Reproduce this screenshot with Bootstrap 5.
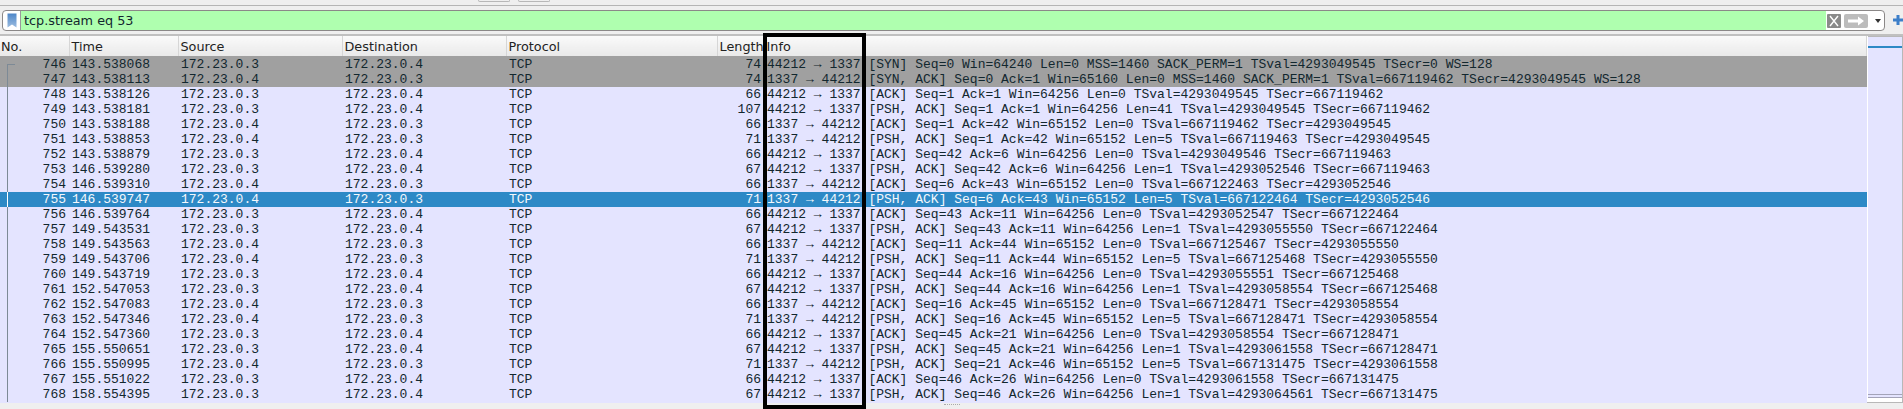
<!DOCTYPE html>
<html lang="en">
<head>
    <meta charset="UTF-8">
    <meta name="viewport" content="width=device-width, initial-scale=1.0">
    <title>Wireshark packet list</title>
    <link href="https://cdn.jsdelivr.net/npm/bootstrap@5.3.0/dist/css/bootstrap.min.css" rel="stylesheet">
    <style>
        html, body { height: 409px; overflow: hidden; }
        body { background: #efefef; position: relative; font-family: "DejaVu Sans", sans-serif; }
        .top-strip { height: 6px; border-bottom: 1px solid #b5b5b5; padding-left: 478px; gap: 8px; }
        .top-btn { width: 32px; height: 2px; border: 1px solid #b8b8b8; border-top: 0; border-radius: 0 0 3px 3px; }
        .filter-row { height: 30px; padding: 4px 0 3px 2px; gap: 8px; border-bottom: 2px solid #c0c0c0; }
        .filter-box { width: 1887px; height: 21px; border: 1px solid #8b8888; border-radius: 4px; background: #fff; overflow: hidden; }
        .mark-btn { width: 18px; border-right: 1px solid #9a9a9a; }
        .filter-input { flex: 1; min-width: 0; height: 100%; border: 0; border-radius: 0; padding: 0 3px; background: #afffaf; color: #12272e; font: 12.8px "DejaVu Sans", sans-serif; }
        .filter-input:focus { background: #afffaf; box-shadow: none; color: #12272e; }
        .act-clear { width: 14px; height: 14px; margin-left: 1px; flex: none; }
        .act-apply { width: 24px; height: 14px; margin-left: 3px; flex: none; }
        .act-caret { width: 0; height: 0; margin: 0 3px 0 7px; flex: none; border-left: 3.5px solid transparent; border-right: 3.5px solid transparent; border-top: 4px solid #333; }
        .add-plus { width: 10px; height: 10px; margin-top: 5px; flex: none; }
        .pkt-pane { height: 367px; border-bottom: 1px solid #b8b8b8; background: #e4e4ff; }
        .pkt-list { width: 1867px; height: 367px; overflow: hidden; background: #e4e4ff; }
        .pkt-table { table-layout: fixed; width: 1867px; margin: 0; font: 13px/15px "Liberation Mono", monospace; }
        .pkt-table > :not(caption) > * > * { padding: 0 3px; height: 15px; white-space: nowrap; overflow: hidden; border: 0; box-shadow: none; color: #12272e; background: #e4e4ff; }
        .pkt-table > thead > tr > th { height: 20px; padding: 1px 2px 0; font: 400 12.8px/19px "DejaVu Sans", sans-serif; color: #222; background: linear-gradient(#fafafa, #e9e9e9); border-right: 1px solid #d6d6d6; }
        .pkt-table > thead > tr > th:first-child { padding-left: 1px; }
        .pkt-table > tbody > tr:first-child > td { height: 16px; padding-top: 1px; }
        .pkt-table > tbody > tr.pkt-syn > td { background: #a0a0a0; }
        .pkt-table > tbody > tr.pkt-sel > td { background: #2d89c6; color: #f4f8fc; }
        .pkt-table > tbody > tr > td.num { text-align: right; position: relative; padding-right: 3px; }
        .pkt-table > tbody > tr > td.no-cell::before { content: ""; position: absolute; left: 7px; top: 0; bottom: 0; border-left: 1px solid #7d8a96; }
        .pkt-table > tbody > tr:first-child > td.no-cell::before { top: 8px; width: 8px; border-top: 1px solid #7d8a96; }
        .pkt-table > tbody > tr.pkt-sel > td.no-cell::before { border-left-color: #fff; }
        .map-gap { width: 1px; background: #fff; }
        .pkt-map { width: 35px; border-top: 1px solid #b8b8b8; border-right: 1px solid #b8b8b8; position: relative; }
        .map-sel { position: absolute; left: 0; right: 0; top: 9px; height: 2px; background: #2d89c6; }
        .map-end { position: absolute; left: 0; right: 0; bottom: 4px; height: 4px; border-top: 1px solid #a3a3b8; border-bottom: 1px solid #a3a3b8; }
        .map-foot { position: absolute; left: 0; right: 0; bottom: 0; height: 4px; background: #fff; }
        .grip { width: 16px; height: 1px; margin-top: 1px; border-top: 1px dotted #aaa; }
        .info-box { position: absolute; left: 763px; top: 33px; width: 103px; height: 376px; border: 4px solid #000; pointer-events: none; }
    </style>
</head>
<body>

    <div class="top-strip d-flex">
        <div class="top-btn"></div>
        <div class="top-btn"></div>
    </div>

    <div class="filter-row d-flex">
        <div class="filter-box d-flex align-items-center">
            <div class="mark-btn h-100 d-flex align-items-center justify-content-center">
                <svg width="10" height="15" viewBox="0 0 10 15"><defs><linearGradient id="mk" x1="0" y1="0" x2="0" y2="1"><stop offset="0" stop-color="#4d86c8"/><stop offset="1" stop-color="#9dbde0"/></linearGradient></defs><path d="M0.5 0.5H9.5V14.5L5 11.5L0.5 14.5Z" fill="url(#mk)"/></svg>
            </div>
            <input class="form-control filter-input" type="text" value="tcp.stream eq 53">
            <svg class="act-clear" viewBox="0 0 14 14"><rect width="14" height="14" rx="1" fill="#8a8a8a"/><path d="M3 2L11 12M11 2L3 12" stroke="#fff" stroke-width="1.4"/></svg>
            <svg class="act-apply" viewBox="0 0 24 14"><rect width="24" height="14" rx="2" fill="#bcbcbc"/><path d="M4 5.5H14V2.5L20 7L14 11.5V8.5H4Z" fill="#fff"/></svg>
            <div class="act-caret"></div>
        </div>
        <svg class="add-plus" viewBox="0 0 10 10"><path d="M3.5 0H6.5V3.5H10V6.5H6.5V10H3.5V6.5H0V3.5H3.5Z" fill="#3d7fc9"/></svg>
    </div>

    <div class="pkt-pane d-flex">
        <div class="pkt-list">
            <table class="table pkt-table">
                <colgroup>
                    <col style="width:69px"><col style="width:109px"><col style="width:164px"><col style="width:164px"><col style="width:211px"><col style="width:47px"><col>
                </colgroup>
                <thead>
                    <tr><th>No.</th><th>Time</th><th>Source</th><th>Destination</th><th>Protocol</th><th>Length</th><th>Info</th></tr>
                </thead>
                <tbody>
                    <tr class="pkt-syn"><td class="num no-cell">746</td><td>143.538068</td><td>172.23.0.3</td><td>172.23.0.4</td><td>TCP</td><td class="num">74</td><td>44212 → 1337 [SYN] Seq=0 Win=64240 Len=0 MSS=1460 SACK_PERM=1 TSval=4293049545 TSecr=0 WS=128</td></tr>
                    <tr class="pkt-syn"><td class="num no-cell">747</td><td>143.538113</td><td>172.23.0.4</td><td>172.23.0.3</td><td>TCP</td><td class="num">74</td><td>1337 → 44212 [SYN, ACK] Seq=0 Ack=1 Win=65160 Len=0 MSS=1460 SACK_PERM=1 TSval=667119462 TSecr=4293049545 WS=128</td></tr>
                    <tr><td class="num no-cell">748</td><td>143.538126</td><td>172.23.0.3</td><td>172.23.0.4</td><td>TCP</td><td class="num">66</td><td>44212 → 1337 [ACK] Seq=1 Ack=1 Win=64256 Len=0 TSval=4293049545 TSecr=667119462</td></tr>
                    <tr><td class="num no-cell">749</td><td>143.538181</td><td>172.23.0.3</td><td>172.23.0.4</td><td>TCP</td><td class="num">107</td><td>44212 → 1337 [PSH, ACK] Seq=1 Ack=1 Win=64256 Len=41 TSval=4293049545 TSecr=667119462</td></tr>
                    <tr><td class="num no-cell">750</td><td>143.538188</td><td>172.23.0.4</td><td>172.23.0.3</td><td>TCP</td><td class="num">66</td><td>1337 → 44212 [ACK] Seq=1 Ack=42 Win=65152 Len=0 TSval=667119462 TSecr=4293049545</td></tr>
                    <tr><td class="num no-cell">751</td><td>143.538853</td><td>172.23.0.4</td><td>172.23.0.3</td><td>TCP</td><td class="num">71</td><td>1337 → 44212 [PSH, ACK] Seq=1 Ack=42 Win=65152 Len=5 TSval=667119463 TSecr=4293049545</td></tr>
                    <tr><td class="num no-cell">752</td><td>143.538879</td><td>172.23.0.3</td><td>172.23.0.4</td><td>TCP</td><td class="num">66</td><td>44212 → 1337 [ACK] Seq=42 Ack=6 Win=64256 Len=0 TSval=4293049546 TSecr=667119463</td></tr>
                    <tr><td class="num no-cell">753</td><td>146.539280</td><td>172.23.0.3</td><td>172.23.0.4</td><td>TCP</td><td class="num">67</td><td>44212 → 1337 [PSH, ACK] Seq=42 Ack=6 Win=64256 Len=1 TSval=4293052546 TSecr=667119463</td></tr>
                    <tr><td class="num no-cell">754</td><td>146.539310</td><td>172.23.0.4</td><td>172.23.0.3</td><td>TCP</td><td class="num">66</td><td>1337 → 44212 [ACK] Seq=6 Ack=43 Win=65152 Len=0 TSval=667122463 TSecr=4293052546</td></tr>
                    <tr class="pkt-sel"><td class="num no-cell">755</td><td>146.539747</td><td>172.23.0.4</td><td>172.23.0.3</td><td>TCP</td><td class="num">71</td><td>1337 → 44212 [PSH, ACK] Seq=6 Ack=43 Win=65152 Len=5 TSval=667122464 TSecr=4293052546</td></tr>
                    <tr><td class="num no-cell">756</td><td>146.539764</td><td>172.23.0.3</td><td>172.23.0.4</td><td>TCP</td><td class="num">66</td><td>44212 → 1337 [ACK] Seq=43 Ack=11 Win=64256 Len=0 TSval=4293052547 TSecr=667122464</td></tr>
                    <tr><td class="num no-cell">757</td><td>149.543531</td><td>172.23.0.3</td><td>172.23.0.4</td><td>TCP</td><td class="num">67</td><td>44212 → 1337 [PSH, ACK] Seq=43 Ack=11 Win=64256 Len=1 TSval=4293055550 TSecr=667122464</td></tr>
                    <tr><td class="num no-cell">758</td><td>149.543563</td><td>172.23.0.4</td><td>172.23.0.3</td><td>TCP</td><td class="num">66</td><td>1337 → 44212 [ACK] Seq=11 Ack=44 Win=65152 Len=0 TSval=667125467 TSecr=4293055550</td></tr>
                    <tr><td class="num no-cell">759</td><td>149.543706</td><td>172.23.0.4</td><td>172.23.0.3</td><td>TCP</td><td class="num">71</td><td>1337 → 44212 [PSH, ACK] Seq=11 Ack=44 Win=65152 Len=5 TSval=667125468 TSecr=4293055550</td></tr>
                    <tr><td class="num no-cell">760</td><td>149.543719</td><td>172.23.0.3</td><td>172.23.0.4</td><td>TCP</td><td class="num">66</td><td>44212 → 1337 [ACK] Seq=44 Ack=16 Win=64256 Len=0 TSval=4293055551 TSecr=667125468</td></tr>
                    <tr><td class="num no-cell">761</td><td>152.547053</td><td>172.23.0.3</td><td>172.23.0.4</td><td>TCP</td><td class="num">67</td><td>44212 → 1337 [PSH, ACK] Seq=44 Ack=16 Win=64256 Len=1 TSval=4293058554 TSecr=667125468</td></tr>
                    <tr><td class="num no-cell">762</td><td>152.547083</td><td>172.23.0.4</td><td>172.23.0.3</td><td>TCP</td><td class="num">66</td><td>1337 → 44212 [ACK] Seq=16 Ack=45 Win=65152 Len=0 TSval=667128471 TSecr=4293058554</td></tr>
                    <tr><td class="num no-cell">763</td><td>152.547346</td><td>172.23.0.4</td><td>172.23.0.3</td><td>TCP</td><td class="num">71</td><td>1337 → 44212 [PSH, ACK] Seq=16 Ack=45 Win=65152 Len=5 TSval=667128471 TSecr=4293058554</td></tr>
                    <tr><td class="num no-cell">764</td><td>152.547360</td><td>172.23.0.3</td><td>172.23.0.4</td><td>TCP</td><td class="num">66</td><td>44212 → 1337 [ACK] Seq=45 Ack=21 Win=64256 Len=0 TSval=4293058554 TSecr=667128471</td></tr>
                    <tr><td class="num no-cell">765</td><td>155.550651</td><td>172.23.0.3</td><td>172.23.0.4</td><td>TCP</td><td class="num">67</td><td>44212 → 1337 [PSH, ACK] Seq=45 Ack=21 Win=64256 Len=1 TSval=4293061558 TSecr=667128471</td></tr>
                    <tr><td class="num no-cell">766</td><td>155.550995</td><td>172.23.0.4</td><td>172.23.0.3</td><td>TCP</td><td class="num">71</td><td>1337 → 44212 [PSH, ACK] Seq=21 Ack=46 Win=65152 Len=5 TSval=667131475 TSecr=4293061558</td></tr>
                    <tr><td class="num no-cell">767</td><td>155.551022</td><td>172.23.0.3</td><td>172.23.0.4</td><td>TCP</td><td class="num">66</td><td>44212 → 1337 [ACK] Seq=46 Ack=26 Win=64256 Len=0 TSval=4293061558 TSecr=667131475</td></tr>
                    <tr><td class="num no-cell">768</td><td>158.554395</td><td>172.23.0.3</td><td>172.23.0.4</td><td>TCP</td><td class="num">67</td><td>44212 → 1337 [PSH, ACK] Seq=46 Ack=26 Win=64256 Len=1 TSval=4293064561 TSecr=667131475</td></tr>
                </tbody>
            </table>
        </div>
        <div class="map-gap"></div>
        <div class="pkt-map">
            <div class="map-sel"></div>
            <div class="map-end"></div>
            <div class="map-foot"></div>
        </div>
    </div>

    <div class="d-flex justify-content-center">
        <div class="grip"></div>
    </div>

    <div class="info-box"></div>

</body>
</html>
